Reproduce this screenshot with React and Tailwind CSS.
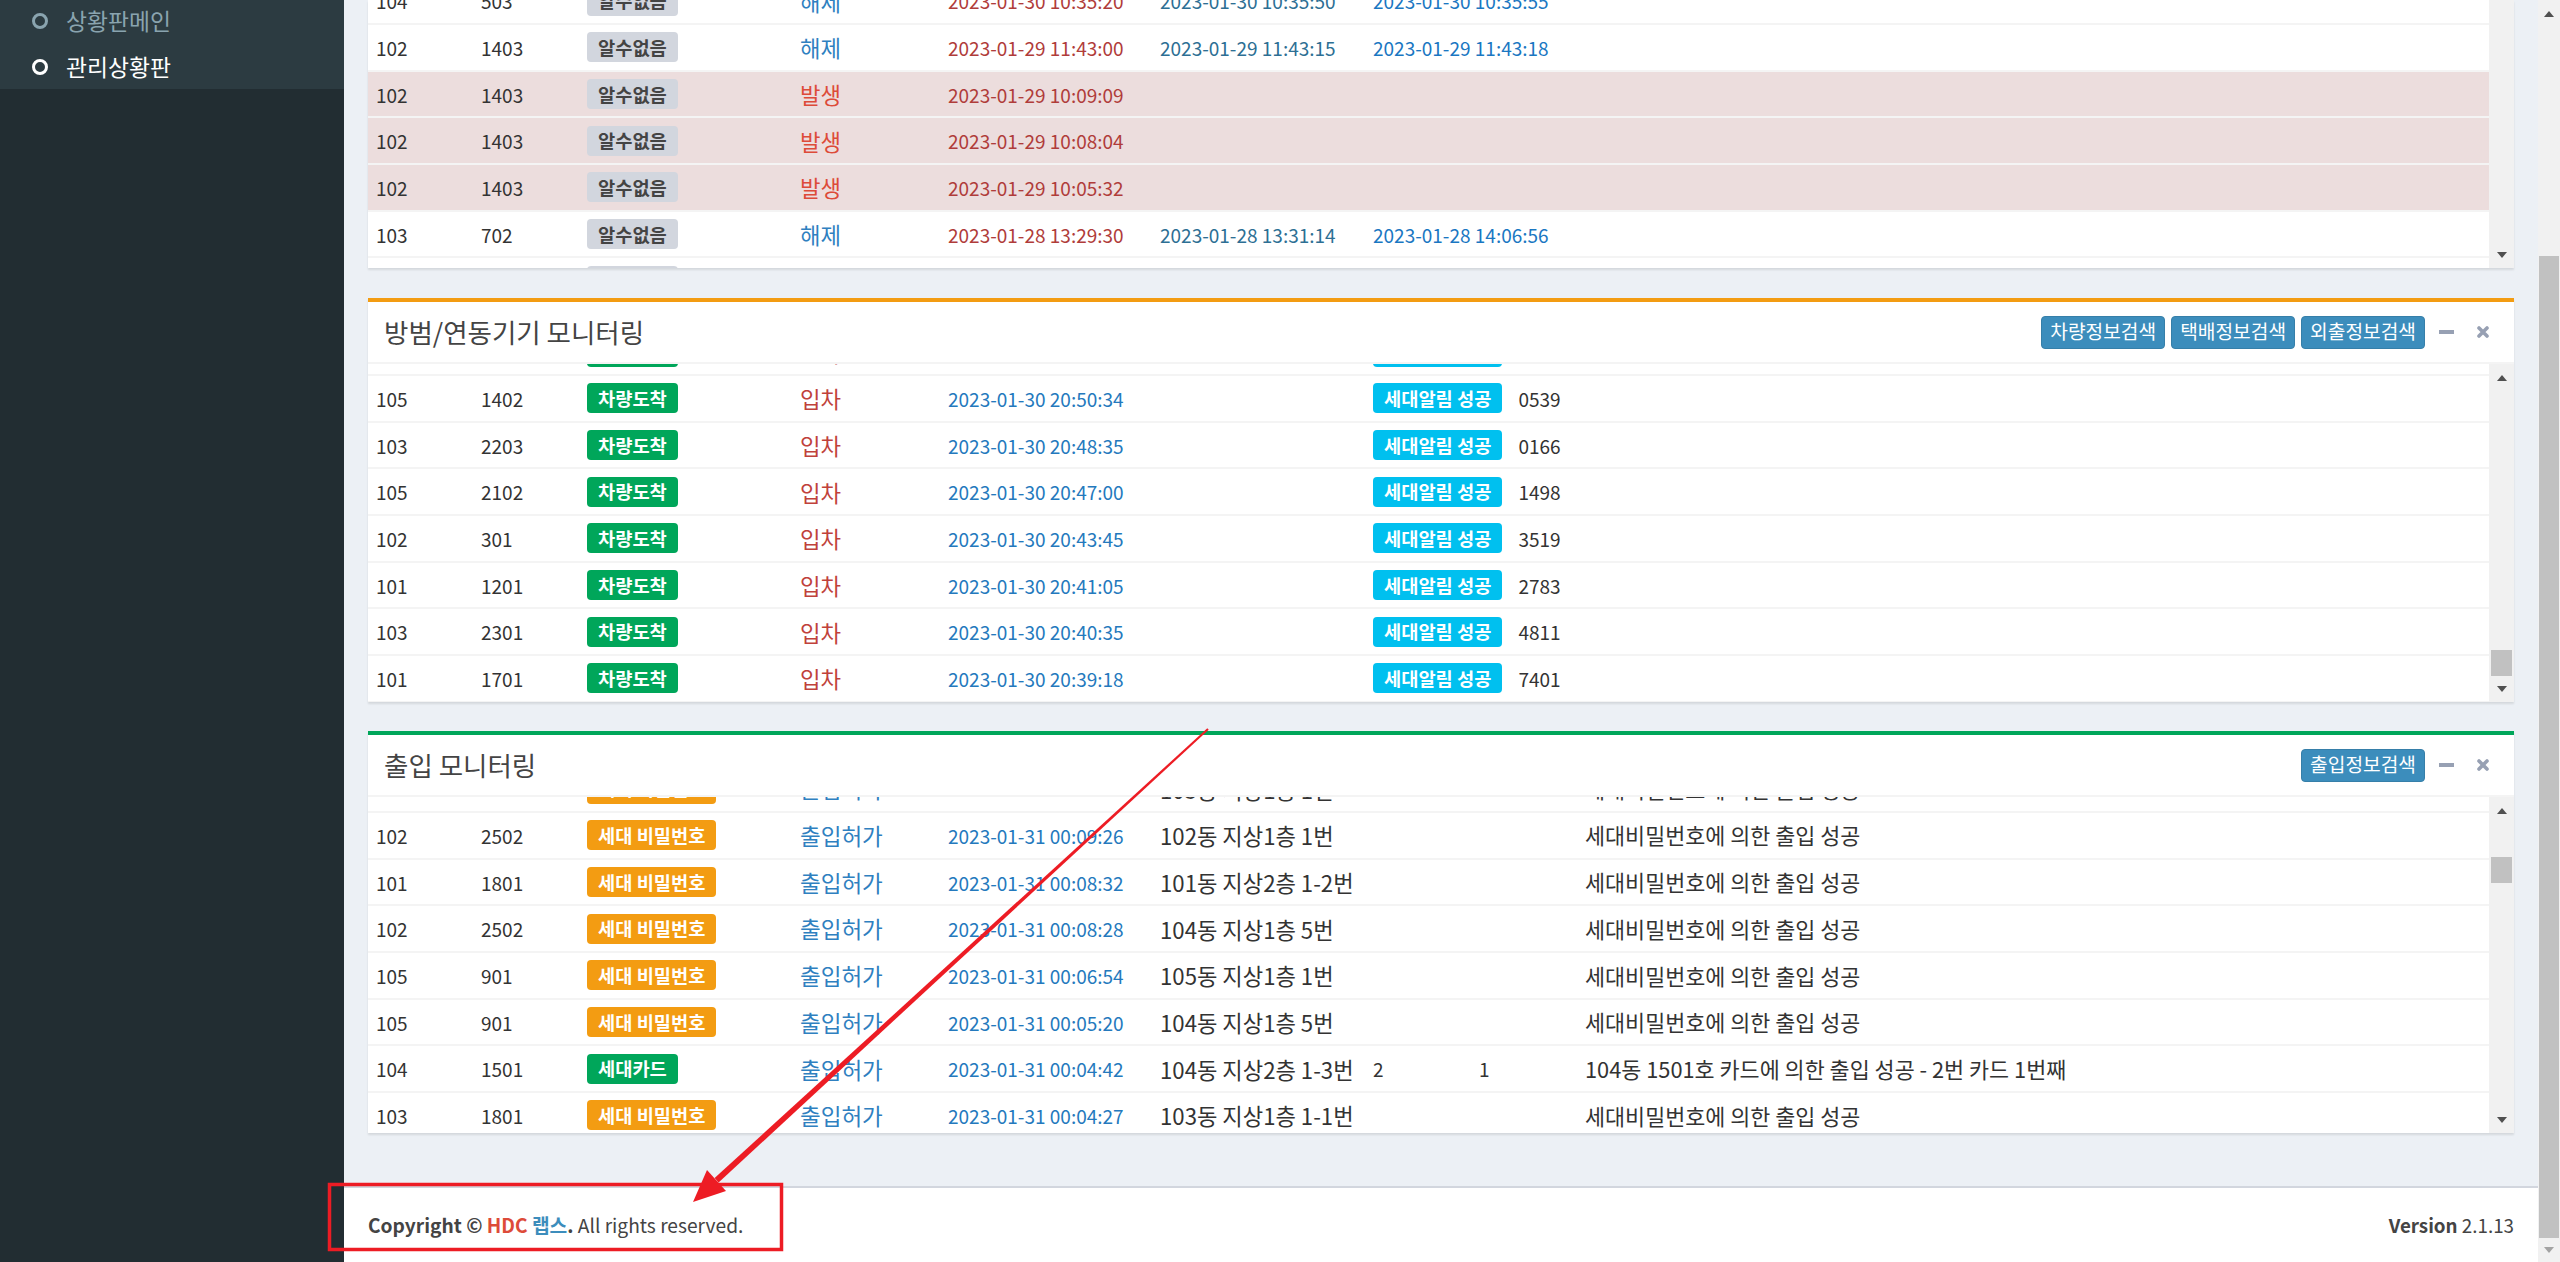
const FONT = "font-['Noto_Sans_CJK_KR','Noto_Sans',sans-serif]";

const Badge = ({ color, children }) => (
  <span
    className={`inline-flex h-[30px] items-center rounded-[4px] px-[11px] text-[18.7px] font-bold leading-none whitespace-nowrap ${color}`}
  >
    {children}
  </span>
);

const GRAY = "bg-[#d2d6de] text-[#444]";
const GREEN = "bg-[#00a65a] text-white";
const CYAN = "bg-[#00c0ef] text-white";
const ORANGE = "bg-[#f39c12] text-white";

const Up = ({ light }) => (
  <svg width="10" height="6" viewBox="0 0 10 6">
    <path d="M0 6 L5 0 L10 6 Z" fill={light ? "#a3a3a3" : "#505050"} />
  </svg>
);
const Down = ({ light }) => (
  <svg width="10" height="6" viewBox="0 0 10 6">
    <path d="M0 0 L10 0 L5 6 Z" fill={light ? "#a3a3a3" : "#505050"} />
  </svg>
);

// inner scrollbar of a box body
const Scrollbar = ({ up = true, gap = 0, thumb = false }) => (
  <div className="flex w-[25px] shrink-0 flex-col bg-[#f1f1f1]">
    {up && (
      <div className="flex h-[28px] items-center justify-center">
        <Up />
      </div>
    )}
    {thumb && (
      <>
        <div style={{ height: gap }} />
        <div className="ml-[2px] h-[26px] w-[21px] bg-[#c1c1c1]" />
      </>
    )}
    <div className="flex-1" />
    <div className="flex h-[26px] items-center justify-center">
      <Down />
    </div>
  </div>
);

const Row = ({ cols, pink, children }) => (
  <div
    className={`grid h-[46.7px] shrink-0 items-center border-b-2 border-[#f4f4f4] pl-[8px] text-[19px] leading-none whitespace-nowrap text-[#333] ${cols} ${
      pink ? "bg-[#ecdddd]" : "bg-white"
    }`}
  >
    {children}
  </div>
);

const P1 = "grid-cols-[105px_106px_213px_148px_212px_213px_1fr]";
const P2 = "grid-cols-[105px_106px_213px_148px_212px_213px_1fr]";
const P3 = "grid-cols-[105px_106px_213px_148px_212px_213px_106px_106px_1fr]";

const alarms = [
  ["104", "503", "해제", "2023-01-30 10:35:20", "2023-01-30 10:35:50", "2023-01-30 10:35:55"],
  ["102", "1403", "해제", "2023-01-29 11:43:00", "2023-01-29 11:43:15", "2023-01-29 11:43:18"],
  ["102", "1403", "발생", "2023-01-29 10:09:09", "", ""],
  ["102", "1403", "발생", "2023-01-29 10:08:04", "", ""],
  ["102", "1403", "발생", "2023-01-29 10:05:32", "", ""],
  ["103", "702", "해제", "2023-01-28 13:29:30", "2023-01-28 13:31:14", "2023-01-28 14:06:56"],
  ["103", "702", "해제", "2023-01-28 13:20:11", "2023-01-28 13:21:40", "2023-01-28 13:22:05"],
];

const cars = [
  ["104", "2201", "2023-01-30 20:52:10", "1120"],
  ["105", "1402", "2023-01-30 20:50:34", "0539"],
  ["103", "2203", "2023-01-30 20:48:35", "0166"],
  ["105", "2102", "2023-01-30 20:47:00", "1498"],
  ["102", "301", "2023-01-30 20:43:45", "3519"],
  ["101", "1201", "2023-01-30 20:41:05", "2783"],
  ["103", "2301", "2023-01-30 20:40:35", "4811"],
  ["101", "1701", "2023-01-30 20:39:18", "7401"],
];

const PW = "세대비밀번호에 의한 출입 성공";
const entries = [
  ["105", "901", "pw", "2023-01-31 00:10:02", "105동 지상1층 1번", "", "", PW],
  ["102", "2502", "pw", "2023-01-31 00:09:26", "102동 지상1층 1번", "", "", PW],
  ["101", "1801", "pw", "2023-01-31 00:08:32", "101동 지상2층 1-2번", "", "", PW],
  ["102", "2502", "pw", "2023-01-31 00:08:28", "104동 지상1층 5번", "", "", PW],
  ["105", "901", "pw", "2023-01-31 00:06:54", "105동 지상1층 1번", "", "", PW],
  ["105", "901", "pw", "2023-01-31 00:05:20", "104동 지상1층 5번", "", "", PW],
  ["104", "1501", "card", "2023-01-31 00:04:42", "104동 지상2층 1-3번", "2", "1", "104동 1501호 카드에 의한 출입 성공 - 2번 카드 1번째"],
  ["103", "1801", "pw", "2023-01-31 00:04:27", "103동 지상1층 1-1번", "", "", PW],
];

const Tools = () => (
  <>
    <span className="ml-[14px] block h-[4px] w-[15px] bg-[#97a0b3]" />
    <svg className="ml-[23px]" width="12" height="12" viewBox="0 0 12 12">
      <path d="M2 2 L10 10 M10 2 L2 10" stroke="#97a0b3" strokeWidth="3.6" strokeLinecap="round" />
    </svg>
  </>
);

const Btn = ({ children }) => (
  <span className="flex h-[33px] items-center rounded-[4px] border border-[#367fa9] bg-[#3c8dbc] px-[8px] text-[19.2px] leading-none text-white">
    {children}
  </span>
);

const BoxHeader = ({ title, children }) => (
  <div className="flex h-[62px] items-center border-b-2 border-[#f4f4f4] pl-[16px] pr-[25px]">
    <h3 className="flex-1 text-[26.5px] leading-none text-[#444]">{title}</h3>
    <div className="flex items-center gap-[6px]">{children}</div>
    <Tools />
  </div>
);

export default function App() {
  return (
    <div className={`relative flex h-[1262px] w-[2560px] overflow-hidden ${FONT}`}>
      {/* sidebar */}
      <aside className="w-[344px] shrink-0 bg-[#222d32]">
        <div className="flex h-[89px] flex-col overflow-hidden bg-[#2c3b41]">
          <div className="-mt-[2px] flex h-[46px] shrink-0 items-center text-[22.8px] text-[#8aa4af]">
            <span className="ml-[32px] mr-[18px] h-[16px] w-[16px] rounded-full border-[3px] border-[#8aa4af]" />
            상황판메인
          </div>
          <div className="flex h-[46px] shrink-0 items-center text-[22.8px] text-white">
            <span className="ml-[32px] mr-[18px] h-[16px] w-[16px] rounded-full border-[3px] border-white" />
            관리상황판
          </div>
        </div>
      </aside>

      {/* main */}
      <main className="flex flex-1 flex-col">
        <div className="flex h-[1186px] flex-col bg-[#ecf0f5] px-[24px]">
          {/* box 1 */}
          <section className="flex h-[268px] bg-white shadow-[0_2px_2px_rgba(0,0,0,0.1)]">
            <div className="flex-1 overflow-hidden">
              <div className="-mt-[21.7px] flex flex-col">
                {alarms.map((r, i) => {
                  const on = r[2] === "발생";
                  return (
                    <Row key={i} cols={P1} pink={on}>
                      <span>{r[0]}</span>
                      <span>{r[1]}</span>
                      <span>
                        <Badge color={GRAY}>알수없음</Badge>
                      </span>
                      <span className={`text-[22.3px] ${on ? "text-[#dd4b39]" : "text-[#2f80c0]"}`}>{r[2]}</span>
                      <span className="text-[#b03c3a]">{r[3]}</span>
                      <span className="text-[#2d6f94]">{r[4]}</span>
                      <span className="text-[#1a77c2]">{r[5]}</span>
                    </Row>
                  );
                })}
              </div>
            </div>
            <Scrollbar up={false} />
          </section>

          {/* box 2 */}
          <section className="mt-[30px] flex flex-col border-t-4 border-[#f39c12] bg-white shadow-[0_2px_2px_rgba(0,0,0,0.1)]">
            <BoxHeader title="방범/연동기기 모니터링">
              <Btn>차량정보검색</Btn>
              <Btn>택배정보검색</Btn>
              <Btn>외출정보검색</Btn>
            </BoxHeader>
            <div className="flex h-[338px]">
              <div className="flex-1 overflow-hidden">
                <div className="-mt-[34.7px] flex flex-col">
                  {cars.map((r, i) => (
                    <Row key={i} cols={P2}>
                      <span>{r[0]}</span>
                      <span>{r[1]}</span>
                      <span>
                        <Badge color={GREEN}>차량도착</Badge>
                      </span>
                      <span className="text-[22.3px] text-[#c0413b]">입차</span>
                      <span className="text-[#2479bd]">{r[2]}</span>
                      <span />
                      <span className="flex items-center gap-[16px]">
                        <Badge color={CYAN}>세대알림 성공</Badge>
                        {r[3]}
                      </span>
                    </Row>
                  ))}
                </div>
              </div>
              <Scrollbar thumb gap={258} />
            </div>
          </section>

          {/* box 3 */}
          <section className="mt-[29px] flex flex-col border-t-4 border-[#00a65a] bg-white shadow-[0_2px_2px_rgba(0,0,0,0.1)]">
            <BoxHeader title="출입 모니터링">
              <Btn>출입정보검색</Btn>
            </BoxHeader>
            <div className="flex h-[336px]">
              <div className="flex-1 overflow-hidden">
                <div className="-mt-[30.7px] flex flex-col">
                  {entries.map((r, i) => (
                    <Row key={i} cols={P3}>
                      <span>{r[0]}</span>
                      <span>{r[1]}</span>
                      <span>
                        {r[2] === "card" ? (
                          <Badge color={GREEN}>세대카드</Badge>
                        ) : (
                          <Badge color={ORANGE}>세대 비밀번호</Badge>
                        )}
                      </span>
                      <span className="text-[22.5px] text-[#2f80c0]">출입허가</span>
                      <span className="text-[#2479bd]">{r[3]}</span>
                      <span className="text-[22.2px]">{r[4]}</span>
                      <span>{r[5]}</span>
                      <span>{r[6]}</span>
                      <span className="text-[21.8px]">{r[7]}</span>
                    </Row>
                  ))}
                </div>
              </div>
              <Scrollbar thumb gap={32} />
            </div>
          </section>
        </div>

        {/* footer */}
        <footer className="flex flex-1 items-center justify-between border-t-2 border-[#d2d6de] bg-white px-[24px] text-[19.2px] text-[#444]">
          <p>
            <b>Copyright ©</b> <b className="text-[#dd4b39]">HDC</b> <b className="text-[#3c8dbc]">랩스</b>
            <b>.</b> All rights reserved.
          </p>
          <p className="text-[18.8px]">
            <b>Version</b> 2.1.13
          </p>
        </footer>
      </main>

      {/* page scrollbar */}
      <div className="flex w-[22px] shrink-0 flex-col bg-[#f1f1f1]">
        <div className="flex h-[28px] items-center justify-center">
          <Up />
        </div>
        <div className="h-[228px]" />
        <div className="mx-[1px] h-[982px] bg-[#c1c1c1]" />
        <div className="flex flex-1 items-center justify-center">
          <Down light />
        </div>
      </div>

      {/* red annotation */}
      <svg className="pointer-events-none absolute left-0 top-0" width="2560" height="1262">
        <rect x="329.5" y="1184.5" width="452" height="65" fill="none" stroke="#ed1c24" strokeWidth="3.5" />
        <polygon points="1208.7,729.7 1207.3,728.3 714.6,1178.1 718.6,1182.5" fill="#ed1c24" />
        <polygon points="693,1202 707,1170 726,1191" fill="#ed1c24" />
      </svg>
    </div>
  );
}
